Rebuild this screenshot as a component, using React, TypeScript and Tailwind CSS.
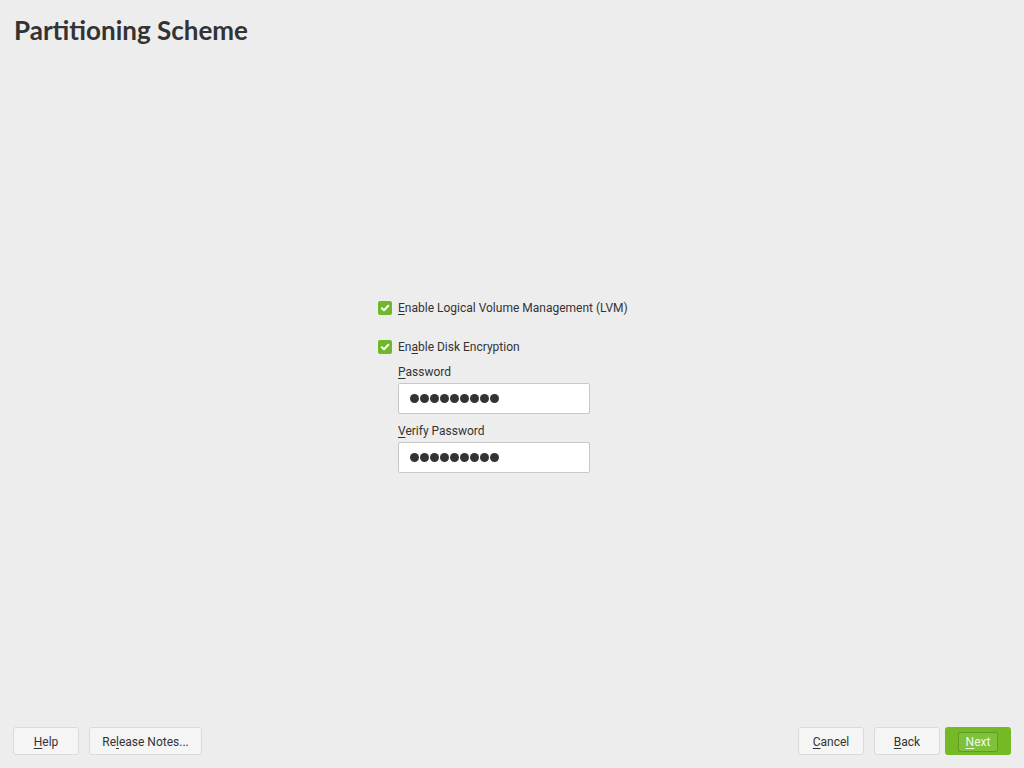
import React from "react";

function Check() {
  return (
    <span className="w-[14px] h-[14px] rounded-[2px] bg-[#6fb829] flex items-center justify-center shrink-0">
      <svg width="10" height="10" viewBox="0 0 10 10">
        <path d="M1.8 5.2 L4 7.3 L8.3 2.8" stroke="#fff" strokeWidth="2" fill="none" strokeLinecap="round" strokeLinejoin="round" />
      </svg>
    </span>
  );
}

function U({ children }: { children: React.ReactNode }) {
  return <span className="underline underline-offset-2">{children}</span>;
}

function Btn({ children, w, primary }: { children: React.ReactNode; w: string; primary?: boolean }) {
  if (primary) {
    return (
      <div className={`${w} h-[28px] rounded-[3px] bg-[#73ba25] flex items-center justify-center pt-px`}>
        <span className="h-[20px] px-[7px] flex items-center border border-[#5e9d20] bg-[#7fc13a] rounded-[2px] text-white/90">{children}</span>
      </div>
    );
  }
  return (
    <div className={`${w} h-[28px] rounded-[3px] bg-[#f5f5f5] border border-[#dadada] flex items-center justify-center text-[#333] pt-px`}>
      {children}
    </div>
  );
}

function PwField() {
  const dots = [0, 1, 2, 3, 4, 5, 6, 7, 8];
  return (
    <div className="w-[192px] h-[31px] bg-white border border-[#c8c8c8] rounded-[2px] flex items-center pl-[11px] gap-px" aria-label="password">
      {dots.map((d) => (
        <span key={d} className="w-[9px] h-[9px] rounded-full bg-[#333]" />
      ))}
    </div>
  );
}

export default function App() {
  return (
    <div className="w-[1024px] h-[768px] bg-[#ededed] flex flex-col text-[12px] text-[#333]" style={{ fontFamily: "Roboto, 'Noto Sans', sans-serif" }}>
      <div className="pl-[14px] pt-[13px] h-[60px]">
        <h1 className="text-[26px] font-bold leading-[34px] text-[#333]" style={{ fontFamily: "Lato, 'Open Sans', sans-serif" }}>
          Partitioning Scheme
        </h1>
      </div>
      <div className="flex-1 pl-[378px] pt-[241px]">
        <div className="flex items-center gap-[6px] h-[14px]">
          <Check />
          <span><U>E</U>nable Logical Volume Management (LVM)</span>
        </div>
        <div className="flex items-center gap-[6px] h-[14px] mt-[25px]">
          <Check />
          <span>En<U>a</U>ble Disk Encryption</span>
        </div>
        <div className="pl-[20px] mt-[10px]">
          <div className="leading-[16px]"><U>P</U>assword</div>
          <div className="mt-[3px]"><PwField /></div>
          <div className="leading-[16px] mt-[9px]"><U>V</U>erify Password</div>
          <div className="mt-[3px]"><PwField /></div>
        </div>
      </div>
      <div className="h-[41px] flex items-start px-[13px] justify-between">
        <div className="flex gap-[10px]">
          <Btn w="w-[66px]"><U>H</U>elp</Btn>
          <Btn w="w-[113px]">Re<U>l</U>ease Notes...</Btn>
        </div>
        <div className="flex gap-[10px]">
          <Btn w="w-[66px]"><U>C</U>ancel</Btn>
          <Btn w="w-[66px]"><U>B</U>ack</Btn>
          <div className="-ml-[5px]">
            <Btn w="w-[66px]" primary><U>N</U>ext</Btn>
          </div>
        </div>
      </div>
    </div>
  );
}
